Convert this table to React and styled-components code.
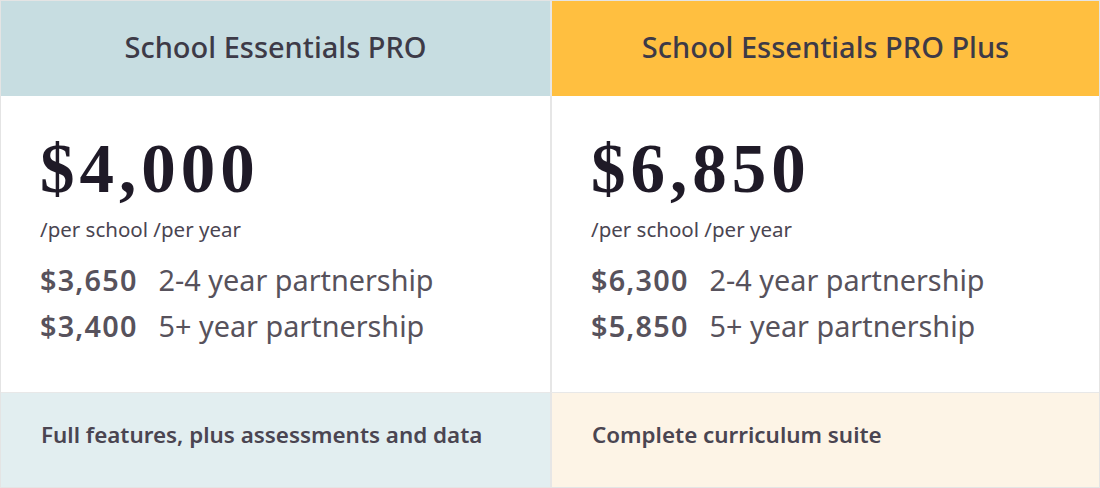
import React from "react";
import styled, { createGlobalStyle } from "styled-components";

const GlobalStyle = createGlobalStyle`
  html, body {
    margin: 0;
    padding: 0;
    background: #ffffff;
  }
  body {
    font-family: "Noto Sans", "Lato", sans-serif;
    -webkit-font-smoothing: antialiased;
  }
`;

const plans = [
  {
    name: "School Essentials PRO",
    tone: "blue",
    price: "$4,000",
    unit: "/per school /per year",
    tiers: [
      { price: "$3,650", label: "2-4 year partnership" },
      { price: "$3,400", label: "5+ year partnership" },
    ],
    summary: "Full features, plus assessments and data",
  },
  {
    name: "School Essentials PRO Plus",
    tone: "gold",
    price: "$6,850",
    unit: "/per school /per year",
    tiers: [
      { price: "$6,300", label: "2-4 year partnership" },
      { price: "$5,850", label: "5+ year partnership" },
    ],
    summary: "Complete curriculum suite",
  },
];

const headColors = { blue: "#c7dde1", gold: "#ffbf40" };
const footColors = { blue: "#e2eef0", gold: "#fdf4e6" };

const Table = styled.div`
  width: 1100px;
  height: 488px;
  box-sizing: border-box;
  display: grid;
  grid-template-columns: 549px 549px;
  grid-template-rows: 95px 296px 95px;
  border: 1px solid #e4e4e4;
  border-bottom-width: 2px;
`;

const Head = styled.div`
  display: flex;
  align-items: center;
  justify-content: center;
  background: ${({ tone }) => headColors[tone]};
  border-left: ${({ first }) => (first ? "none" : "2px solid #e6e6e6")};
  font-size: 29px;
  font-weight: 500;
  color: #3d3a47;
  padding-bottom: 5px;
`;

const Body = styled.div`
  display: flex;
  flex-direction: column;
  padding: 38px 0 0 39px;
  background: #ffffff;
  border-left: ${({ first }) => (first ? "none" : "2px solid #e6e6e6")};
`;

const BigPrice = styled.div`
  font-family: "Liberation Serif", "Times New Roman", serif;
  font-weight: 700;
  font-size: 69px;
  line-height: 70px;
  letter-spacing: 5px;
  color: #1f1a27;
`;

const Unit = styled.div`
  margin-top: 12px;
  font-size: 20.5px;
  line-height: 26px;
  color: #4a4551;
`;

const Tiers = styled.div`
  margin-top: 19px;
  display: flex;
  flex-direction: column;
  gap: 8px;
`;

const Tier = styled.div`
  display: flex;
  align-items: baseline;
  gap: 21px;
  font-size: 28.8px;
  line-height: 38px;
  color: #57525c;
`;

const TierPrice = styled.span`
  font-weight: 600;
  letter-spacing: 1.2px;
`;

const Foot = styled.div`
  display: flex;
  align-items: center;
  padding: 0 0 11px 40px;
  background: ${({ tone }) => footColors[tone]};
  border-top: 1px solid #e8e8e8;
  border-left: ${({ first }) => (first ? "none" : "2px solid #e6e6e6")};
  font-size: 22.4px;
  font-weight: 600;
  color: #4a4551;
`;

export default function App() {
  return (
    <>
      <GlobalStyle />
      <Table>
        {plans.map((p, i) => (
          <Head key={p.name} tone={p.tone} first={i === 0}>
            {p.name}
          </Head>
        ))}
        {plans.map((p, i) => (
          <Body key={p.name} first={i === 0}>
            <BigPrice>{p.price}</BigPrice>
            <Unit>{p.unit}</Unit>
            <Tiers>
              {p.tiers.map((t) => (
                <Tier key={t.price}>
                  <TierPrice>{t.price}</TierPrice>
                  <span>{t.label}</span>
                </Tier>
              ))}
            </Tiers>
          </Body>
        ))}
        {plans.map((p, i) => (
          <Foot key={p.name} tone={p.tone} first={i === 0}>
            {p.summary}
          </Foot>
        ))}
      </Table>
    </>
  );
}
